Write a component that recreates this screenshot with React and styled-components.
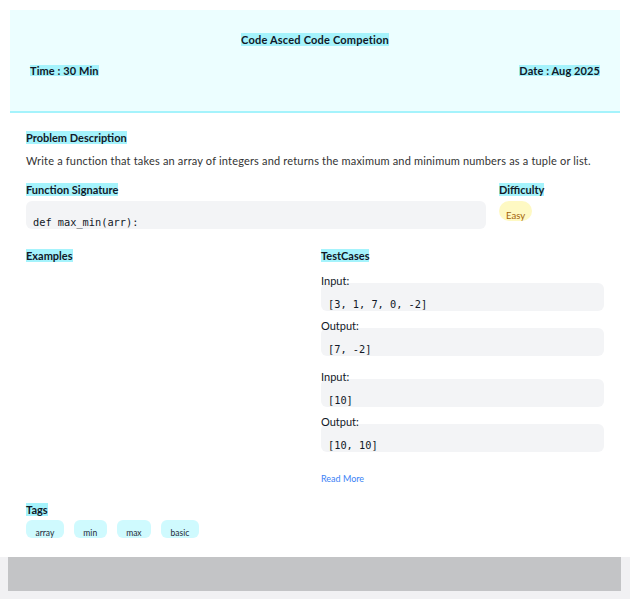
import React from 'react';
import styled, { createGlobalStyle } from 'styled-components';

const GlobalStyle = createGlobalStyle`
  body {
    margin: 0;
    background: #ffffff;
    font-family: 'Lato', 'Noto Sans', sans-serif;
    color: #111827;
  }
`;

const Page = styled.div`
  width: 630px;
  height: 599px;
  display: flex;
  flex-direction: column;
  overflow: hidden;
`;

const Card = styled.div`
  flex: 1;
  padding: 10px 10px 0 10px;
`;

const Header = styled.header`
  height: 103px;
  background: #ecfeff;
  border-bottom: 2px solid #a5f3fc;
  padding: 24px 20px 0 20px;
  box-sizing: border-box;
`;

const Title = styled.h1`
  margin: 0;
  text-align: center;
  font-size: 11px;
  font-weight: 700;
  line-height: 1;
  letter-spacing: 0.2px;
`;

const MetaRow = styled.div`
  display: flex;
  justify-content: space-between;
  margin-top: 20px;
  font-size: 11px;
  font-weight: 700;
  letter-spacing: 0.1px;
`;

const Mark = styled.span`
  background: #a5f3fc;
  line-height: 1;
  color: #111827;
`;

const Body = styled.main`
  padding: 18px 16px 0 16px;
`;

const Heading = styled.h2`
  margin: ${(p) => p.$top || 0}px 0 0 0;
  font-size: 11px;
  font-weight: 700;
  line-height: 14px;
`;

const Text = styled.p`
  margin: 9px 0 0 0;
  font-size: 11px;
  line-height: 14px;
  letter-spacing: 0.18px;
  color: #333333;
`;

const SigRow = styled.div`
  display: flex;
  gap: 13px;
  margin-top: 15px;
`;

const SigCol = styled.div`
  flex: ${(p) => (p.$grow ? 1 : '0 0 105px')};
`;

const CodeBox = styled.pre`
  margin: ${(p) => p.$top || 4}px 0 0 0;
  background: #f3f4f6;
  border-radius: 6px;
  height: 28px;
  box-sizing: border-box;
  padding: 14px 7px 0 7px;
  font-family: 'DejaVu Sans Mono', monospace;
  font-size: 10.3px;
  line-height: 14px;
  color: #111827;
  overflow: hidden;
`;

const Pill = styled.span`
  display: inline-block;
  margin-top: 4px;
  height: 20px;
  padding: 0 7px;
  box-sizing: border-box;
  border-radius: 10px;
  background: #fef9c3;
  color: #a16207;
  font-size: 9.5px;
  line-height: 29px;
  overflow: hidden;
`;

const Columns = styled.div`
  display: grid;
  grid-template-columns: 283px 283px;
  gap: 12px;
  margin-top: 20px;
`;

const Label = styled.div`
  font-size: 11px;
  line-height: 14px;
  margin-top: ${(p) => p.$top || 0}px;
  color: #111827;
`;

const Case = styled.div`
  margin-top: ${(p) => p.$top || 0}px;
`;

const ReadMore = styled.a`
  display: block;
  margin-top: 21px;
  font-size: 9px;
  color: #3b82f6;
  text-decoration: none;
`;

const TagRow = styled.div`
  display: flex;
  gap: 10px;
  margin-top: 3px;
`;

const Tag = styled.span`
  height: 18px;
  padding: 0 9.5px;
  border-radius: 6px;
  background: #cffafe;
  font-size: 8.5px;
  line-height: 27px;
  color: #1f2937;
  overflow: hidden;
`;

const Track = styled.div`
  height: 42px;
  background: #f1f1f3;
  padding: 0 9px 8px 8px;
  box-sizing: border-box;
`;

const Thumb = styled.div`
  height: 34px;
  background: #c3c4c6;
`;

const tests = [
  { input: '[3, 1, 7, 0, -2]', output: '[7, -2]' },
  { input: '[10]', output: '[10, 10]' },
];

const tags = ['array', 'min', 'max', 'basic'];

export default function App() {
  return (
    <Page>
      <GlobalStyle />
      <Card>
        <Header>
          <Title>
            <Mark>Code Asced Code Competion</Mark>
          </Title>
          <MetaRow>
            <Mark>Time : 30 Min</Mark>
            <Mark>Date : Aug 2025</Mark>
          </MetaRow>
        </Header>
        <Body>
          <Heading>
            <Mark>Problem Description</Mark>
          </Heading>
          <Text>
            Write a function that takes an array of integers and returns the maximum and minimum numbers as a tuple or list.
          </Text>
          <SigRow>
            <SigCol $grow>
              <Heading>
                <Mark>Function Signature</Mark>
              </Heading>
              <CodeBox>def max_min(arr):</CodeBox>
            </SigCol>
            <SigCol>
              <Heading>
                <Mark>Difficulty</Mark>
              </Heading>
              <Pill>Easy</Pill>
            </SigCol>
          </SigRow>
          <Columns>
            <div>
              <Heading>
                <Mark>Examples</Mark>
              </Heading>
            </div>
            <div>
              <Heading>
                <Mark>TestCases</Mark>
              </Heading>
              {tests.map((t, i) => (
                <Case key={i} $top={i === 0 ? 11 : 14}>
                  <Label>Input:</Label>
                  <CodeBox $top={-5}>{t.input}</CodeBox>
                  <Label $top={8}>Output:</Label>
                  <CodeBox $top={-5}>{t.output}</CodeBox>
                </Case>
              ))}
              <ReadMore href="#">Read More</ReadMore>
            </div>
          </Columns>
          <Heading $top={19}>
            <Mark>Tags</Mark>
          </Heading>
          <TagRow>
            {tags.map((t) => (
              <Tag key={t}>{t}</Tag>
            ))}
          </TagRow>
        </Body>
      </Card>
      <Track>
        <Thumb />
      </Track>
    </Page>
  );
}
